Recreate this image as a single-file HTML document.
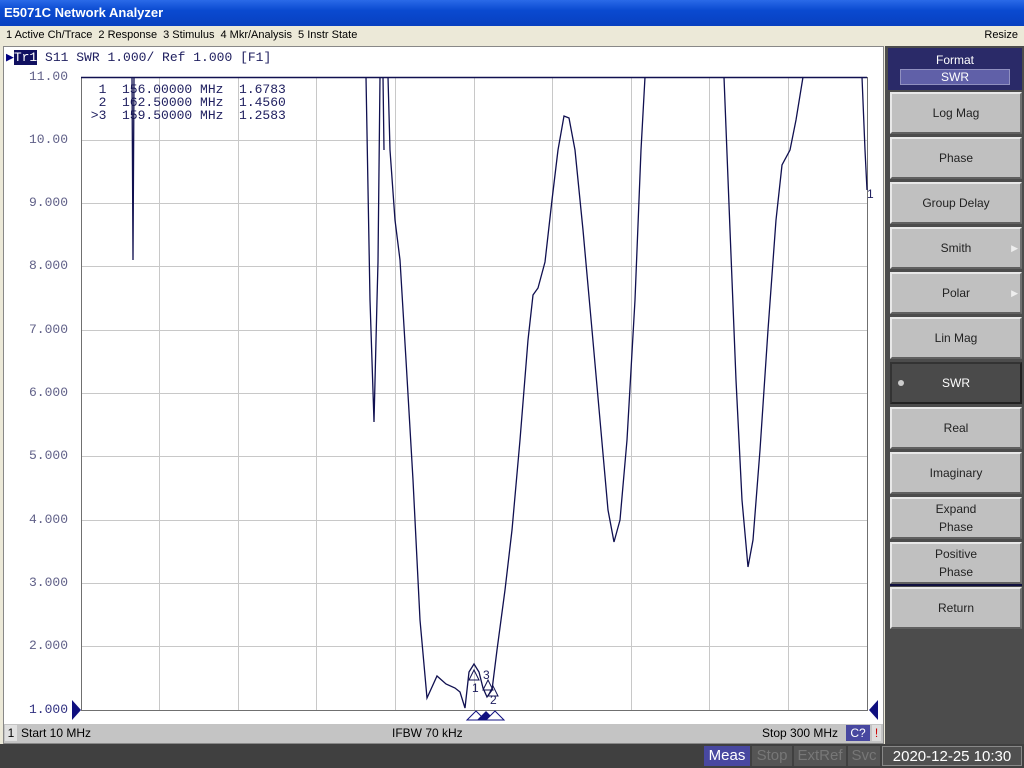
<!DOCTYPE html>
<html><head><style>
*{margin:0;padding:0;box-sizing:border-box}
body{width:1024px;height:768px;position:relative;overflow:hidden;background:#ece9d8;font-family:"Liberation Sans",Tahoma,sans-serif}
.title{position:absolute;left:0;top:0;width:1024px;height:26px;background:linear-gradient(#2a6ae8,#0a4ad0 40%,#0840c0);color:#fff;font-weight:bold;font-size:13px;line-height:26px;padding-left:4px}
.menu{position:absolute;left:0;top:26px;width:1024px;height:19px;background:#ece9d8;font-size:11px;line-height:19px;color:#000}
.menu span{margin-left:6px}
.mono{font-family:"Liberation Mono",monospace}
.chart{position:absolute;left:3px;top:46px;width:881px;height:698px;background:#fff;border:1px solid #888}
.right{position:absolute;left:885px;top:46px;width:139px;height:698px;background:#4c4c4c}
.btn{position:absolute;left:5px;width:132px;height:42px;background:#c0c0c0;border-top:2px solid #e8e8e8;border-left:2px solid #e8e8e8;border-bottom:2px solid #606060;border-right:2px solid #707070;font-size:12px;color:#222;text-align:center;display:flex;align-items:center;justify-content:center;line-height:18px}
.bot{position:absolute;left:0;top:744px;width:1024px;height:24px;background:#404040}
.ylab{position:absolute;font-family:"Liberation Mono",monospace;font-size:13px;color:#606088;width:68px;text-align:right;left:0}
</style></head><body>
<div class="title">E5071C Network Analyzer</div>
<div class="menu"><span>1 Active Ch/Trace</span><span>2 Response</span><span>3 Stimulus</span><span>4 Mkr/Analysis</span><span>5 Instr State</span><span style="position:absolute;right:6px">Resize</span></div>
<div class="chart">
<div class="mono" style="position:absolute;left:2px;top:3px;font-size:13px;color:#202060;white-space:pre"><span style="color:#000080">&#9654;</span><span style="background:#101060;color:#fff">Tr1</span> S11 SWR 1.000/ Ref 1.000 [F1]</div>
<div style="position:absolute;left:0;top:677px;width:879px;height:19px;background:#c4c4c4;font-size:12px;line-height:19px">
<span style="position:absolute;left:1px;top:1px;width:12px;height:16px;background:#e0e0e0;text-align:center;line-height:16px">1</span>
<span style="position:absolute;left:17px">Start 10 MHz</span>
<span style="position:absolute;left:388px">IFBW 70 kHz</span>
<span style="position:absolute;left:758px">Stop 300 MHz</span>
<span style="position:absolute;left:842px;top:1px;width:24px;height:16px;background:#4848a0;color:#fff;text-align:center;line-height:16px">C?</span>
<span style="position:absolute;left:868px;top:1px;width:9px;height:16px;background:#ddd;color:#c00;text-align:center;line-height:16px">!</span>
</div>
</div>
<div class="ylab" style="top:69px">11.00</div>
<div class="ylab" style="top:132px">10.00</div>
<div class="ylab" style="top:195px">9.000</div>
<div class="ylab" style="top:258px">8.000</div>
<div class="ylab" style="top:322px">7.000</div>
<div class="ylab" style="top:385px">6.000</div>
<div class="ylab" style="top:448px">5.000</div>
<div class="ylab" style="top:512px">4.000</div>
<div class="ylab" style="top:575px">3.000</div>
<div class="ylab" style="top:638px">2.000</div>
<div class="ylab" style="top:702px;color:#303080">1.000</div>
<svg style="position:absolute;left:0;top:0" width="1024" height="768">
<g stroke="#c8c8c8" stroke-width="1">
<line x1="159.5" y1="77" x2="159.5" y2="710"/><line x1="238.5" y1="77" x2="238.5" y2="710"/><line x1="316.5" y1="77" x2="316.5" y2="710"/><line x1="395.5" y1="77" x2="395.5" y2="710"/><line x1="474.5" y1="77" x2="474.5" y2="710"/><line x1="552.5" y1="77" x2="552.5" y2="710"/><line x1="631.5" y1="77" x2="631.5" y2="710"/><line x1="709.5" y1="77" x2="709.5" y2="710"/><line x1="788.5" y1="77" x2="788.5" y2="710"/>
<line x1="81" y1="140.5" x2="867" y2="140.5"/><line x1="81" y1="203.5" x2="867" y2="203.5"/><line x1="81" y1="266.5" x2="867" y2="266.5"/><line x1="81" y1="330.5" x2="867" y2="330.5"/><line x1="81" y1="393.5" x2="867" y2="393.5"/><line x1="81" y1="456.5" x2="867" y2="456.5"/><line x1="81" y1="520.5" x2="867" y2="520.5"/><line x1="81" y1="583.5" x2="867" y2="583.5"/><line x1="81" y1="646.5" x2="867" y2="646.5"/>
</g>
<rect x="81.5" y="77.5" width="786" height="633" fill="none" stroke="#707070"/>
<line x1="81" y1="77.5" x2="867" y2="77.5" stroke="#101050" stroke-width="1.5"/>
<g font-family="Liberation Mono,monospace" font-size="13" fill="#202060"><text x="83" y="93" style="white-space:pre">  1  156.00000 MHz  1.6783</text><text x="83" y="106" style="white-space:pre">  2  162.50000 MHz  1.4560</text><text x="83" y="119" style="white-space:pre"> &gt;3  159.50000 MHz  1.2583</text></g>
<path d="M132,77 L133,260 L134,77 M366,77 L370,300 L374,422 L377,300 L378,262 L380,77 M383,77 L384,150 M388,77 L390,150 L395,220 L400,260 L406,360 L413,480 L420,620 L427,698 L437,676 L446,684 L455,688 L460,692 L465,708 L469,672 L474,664 L479,672 L483,688 L487,697 L492,690 L497,650 L505,590 L512,530 L520,440 L528,340 L533,295 L538,288 L545,262 L552,200 L558,150 L564,116 L569,118 L575,150 L583,230 L592,330 L600,420 L608,510 L614,542 L620,520 L627,440 L635,300 L641,150 L645,77 M724,77 L730,230 L736,380 L742,500 L748,567 L753,540 L760,450 L768,330 L776,220 L782,165 L790,150 L796,120 L803,77 M862,77 L865,150 L867,190" fill="none" stroke="#101050" stroke-width="1.3"/>
<g fill="none" stroke="#101050" stroke-width="1"><path d="M469,680 L474,670 L479,680 Z M483,690 L488,680 L493,690 Z M488,696 L493,686 L498,696 Z"/></g>
<g font-family="Liberation Sans,sans-serif" font-size="12" fill="#202060"><text x="472" y="692">1</text><text x="483" y="679">3</text><text x="490" y="704">2</text><text x="867" y="198">1</text></g>
<polygon points="72,700 72,720 81,710" fill="#101080"/>
<polygon points="878,700 878,720 869,710" fill="#101080"/>
<polygon points="467,720 476,711 485,720" fill="#fff" stroke="#101080"/>
<polygon points="477,720 486,711 495,720" fill="#101080"/>
<polygon points="486,720 495,711 504,720" fill="#fff" stroke="#101080"/>
</svg>
<div class="right">
<div style="position:absolute;left:3px;top:2px;width:134px;height:42px;background:#2a2a68;color:#fff;font-size:12px;text-align:center;padding-top:5px">Format
<div style="margin:2px auto 0;width:110px;height:16px;background:#6060a8;border:1px solid #9090c0;line-height:14px">SWR</div></div>
<div class="btn" style="top:46px">Log Mag</div>
<div class="btn" style="top:91px">Phase</div>
<div class="btn" style="top:136px">Group Delay</div>
<div class="btn" style="top:181px">Smith<span style="position:absolute;right:2px;color:#eee;font-size:9px">&#9654;</span></div>
<div class="btn" style="top:226px">Polar<span style="position:absolute;right:2px;color:#eee;font-size:9px">&#9654;</span></div>
<div class="btn" style="top:271px">Lin Mag</div>
<div class="btn" style="top:316px;background:#4a4a4a;color:#fff;border-color:#333 #222 #222 #333">SWR<span style="position:absolute;left:6px;top:16px;width:6px;height:6px;border-radius:3px;background:#ccc"></span></div>
<div class="btn" style="top:361px">Real</div>
<div class="btn" style="top:406px">Imaginary</div>
<div class="btn" style="top:451px">Expand<br>Phase</div>
<div class="btn" style="top:496px">Positive<br>Phase</div>
<div style="position:absolute;left:5px;top:538px;width:132px;height:2px;background:#101040"></div>
<div class="btn" style="top:541px">Return</div>
</div>
<div class="bot">
<span style="position:absolute;left:704px;top:2px;width:46px;height:20px;background:#4848a0;color:#fff;font-size:15px;text-align:center;line-height:20px">Meas</span>
<span style="position:absolute;left:752px;top:2px;width:40px;height:20px;background:#555;color:#777;font-size:15px;text-align:center;line-height:20px">Stop</span>
<span style="position:absolute;left:794px;top:2px;width:52px;height:20px;background:#555;color:#777;font-size:15px;text-align:center;line-height:20px">ExtRef</span>
<span style="position:absolute;left:848px;top:2px;width:32px;height:20px;background:#555;color:#777;font-size:15px;text-align:center;line-height:20px">Svc</span>
<span style="position:absolute;left:882px;top:2px;width:140px;height:20px;background:#505050;color:#fff;font-size:15px;text-align:center;line-height:20px;border:1px solid #888">2020-12-25 10:30</span>
</div>
</body></html>
